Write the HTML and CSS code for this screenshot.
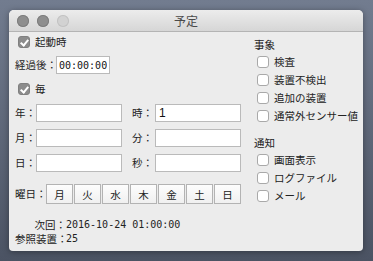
FILE: index.html
```html
<!DOCTYPE html>
<html lang="ja">
<head>
    <meta charset="UTF-8">
    <title>予定</title>
    <link rel="stylesheet" href="styles.css">
</head>
<body>
    <div class="window">
        <div class="titlebar">
            <div class="lights">
                <span class="light"></span>
                <span class="light"></span>
                <span class="light off"></span>
            </div>
            <div class="title">予定</div>
        </div>

        <div class="content">
            <!-- Schedule -->
            <div class="left">
                <div class="check-row first">
                    <span class="box checked"></span>
                    <span>起動時</span>
                </div>

                <div class="field-row elapsed">
                    <label>経過後：</label>
                    <input type="text" class="time-input" value="00:00:00">
                </div>

                <div class="check-row every">
                    <span class="box checked"></span>
                    <span>毎</span>
                </div>

                <div class="grid">
                    <div class="field-row"><label>年：</label><input type="text"></div>
                    <div class="field-row"><label>時：</label><input type="text" value="1"></div>
                    <div class="field-row"><label>月：</label><input type="text"></div>
                    <div class="field-row"><label>分：</label><input type="text"></div>
                    <div class="field-row"><label>日：</label><input type="text"></div>
                    <div class="field-row"><label>秒：</label><input type="text"></div>
                </div>

                <div class="week-row">
                    <label>曜日：</label>
                    <div class="days">
                        <button>月</button>
                        <button>火</button>
                        <button>水</button>
                        <button>木</button>
                        <button>金</button>
                        <button>土</button>
                        <button>日</button>
                    </div>
                </div>

                <div class="info">
                    <div class="info-row"><span class="info-label">次回：</span><span class="mono">2016-10-24 01:00:00</span></div>
                    <div class="info-row"><span class="info-label">参照装置：</span><span class="mono">25</span></div>
                </div>
            </div>

            <!-- Events / notifications -->
            <div class="right">
                <div class="group-title">事象</div>
                <div class="check-row item"><span class="box"></span><span>検査</span></div>
                <div class="check-row item"><span class="box"></span><span>装置不検出</span></div>
                <div class="check-row item"><span class="box"></span><span>追加の装置</span></div>
                <div class="check-row item"><span class="box"></span><span>通常外センサー値</span></div>

                <div class="group-title notify">通知</div>
                <div class="check-row item"><span class="box"></span><span>画面表示</span></div>
                <div class="check-row item"><span class="box"></span><span>ログファイル</span></div>
                <div class="check-row item"><span class="box"></span><span>メール</span></div>
            </div>
        </div>
    </div>
</body>
</html>
```

FILE: styles.css
```css
/* General */
body {
    margin: 0;
    height: 261px;
    overflow: hidden;
    background: linear-gradient(#727c8f, #4b5363);
    font-family: "Noto Sans CJK JP", "Noto Sans", sans-serif;
    font-size: 10.5px;
    color: #222;
}

/* Window */
.window {
    margin: 10px 0 0 9px;
    width: 354px;
    height: 241px;
    background: #ececec;
    border-radius: 5px 5px 4px 4px;
    box-shadow: 0 1px 6px rgba(0, 0, 0, 0.35);
    overflow: hidden;
}

.titlebar {
    height: 21px;
    border-bottom: 1px solid #b4b4b4;
    background: linear-gradient(#ececec, #d6d6d6);
    display: flex;
    align-items: center;
    position: relative;
}

.lights {
    display: flex;
    gap: 8px;
    padding-left: 8px;
}

.light {
    width: 12px;
    height: 12px;
    border-radius: 50%;
    background: #8e8e8e;
    box-shadow: inset 0 0 0 1px #7d7d7d;
}

.light.off {
    background: #d2d2d2;
    box-shadow: inset 0 0 0 1px #c2c2c2;
}

.title {
    position: absolute;
    left: 0;
    right: 0;
    text-align: center;
    font-size: 12px;
    color: #4a4a4a;
    line-height: 21px;
}

/* Content */
.content {
    display: flex;
}

.left {
    width: 245px;
    flex-shrink: 0;
    padding-left: 6px;
    box-sizing: border-box;
}

.right {
    padding-top: 6px;
}

label {
    line-height: 14px;
    white-space: nowrap;
    flex-shrink: 0;
}

/* Checkboxes */
.check-row {
    display: flex;
    align-items: center;
    gap: 5px;
    height: 16px;
    line-height: 14px;
    white-space: nowrap;
}

.check-row.first {
    margin: 2px 0 0 3px;
}

.check-row.every {
    margin: 7px 0 0 3px;
}

.box {
    width: 12px;
    height: 12px;
    flex-shrink: 0;
    box-sizing: border-box;
    border: 1px solid #a9a9a9;
    border-radius: 3px;
    background: #fff;
    position: relative;
}

.box.checked {
    background: #8c8c8c;
    border-color: #808080;
}

.box.checked::after {
    content: "";
    position: absolute;
    left: 3px;
    top: 1px;
    width: 3px;
    height: 6px;
    border: solid #fff;
    border-width: 0 2px 2px 0;
    transform: rotate(40deg);
}

/* Fields */
.field-row {
    display: flex;
    align-items: center;
    height: 18px;
}

.field-row.elapsed {
    margin-top: 6px;
}

input[type="text"] {
    width: 86px;
    height: 18px;
    box-sizing: border-box;
    margin: 0;
    padding: 0 3px;
    border: 1px solid #bababa;
    background: #fff;
    font-family: "Liberation Sans", sans-serif;
    font-size: 12px;
    color: #111;
    outline: none;
}

input.time-input {
    width: 54px;
    margin-left: -1px;
    padding: 0 2px;
    font-family: "DejaVu Sans Mono", monospace;
    font-size: 10px;
}

.grid {
    display: grid;
    grid-template-columns: 107px 109px;
    column-gap: 10px;
    row-gap: 7px;
    margin-top: 7px;
}

.grid .field-row:nth-child(even) input {
    margin-left: 2px;
}

/* Weekdays */
.week-row {
    display: flex;
    align-items: center;
    margin-top: 12px;
}

.week-row label {
    width: 31px;
}

.days {
    display: flex;
    gap: 1px;
}

.days button {
    width: 27px;
    height: 20px;
    margin: 0;
    padding: 0;
    border: 1px solid #b3b3b3;
    background: linear-gradient(#fdfdfd, #f0f0f0);
    font-family: "Noto Sans CJK JP", sans-serif;
    font-size: 10.5px;
    color: #222;
}

/* Info */
.info {
    margin-top: 13px;
}

.info-row {
    display: flex;
    align-items: center;
    height: 14px;
}

.info-label {
    width: 51px;
    text-align: right;
    white-space: nowrap;
    flex-shrink: 0;
}

.mono {
    font-family: "DejaVu Sans Mono", monospace;
    font-size: 10px;
}

/* Right groups */
.group-title {
    line-height: 14px;
    height: 15px;
}

.group-title.notify {
    margin-top: 11px;
}

.check-row.item {
    height: 18px;
    margin-left: 3px;
}
```
